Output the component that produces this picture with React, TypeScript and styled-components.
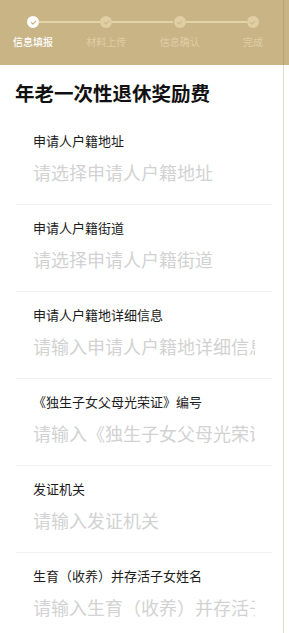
import React from 'react';
import styled, { createGlobalStyle } from 'styled-components';

const GlobalStyle = createGlobalStyle`
    html, body {
        margin: 0;
        padding: 0;
        background: #ffffff;
    }
    body {
        font-family: 'Noto Sans CJK SC', 'Noto Sans', sans-serif;
    }
`;

const steps = ['信息填报', '材料上传', '信息确认', '完成'];

const fields = [
    { label: '申请人户籍地址', placeholder: '请选择申请人户籍地址' },
    { label: '申请人户籍街道', placeholder: '请选择申请人户籍街道' },
    { label: '申请人户籍地详细信息', placeholder: '请输入申请人户籍地详细信息' },
    { label: '《独生子女父母光荣证》编号', placeholder: '请输入《独生子女父母光荣证》编号' },
    { label: '发证机关', placeholder: '请输入发证机关' },
    { label: '生育（收养）并存活子女姓名', placeholder: '请输入生育（收养）并存活子女姓名' }
];

function Check({ color }: { color: string }) {
    return (
        <svg width='7' height='7' viewBox='0 0 10 10'>
            <path d='M2 5.2 L4.2 7.3 L8.2 3' fill='none' stroke={color} strokeWidth='1.6' strokeLinecap='round' strokeLinejoin='round' />
        </svg>
    );
}

export default function App() {
    return (
        <Page>
            <GlobalStyle />
            <Header>
                <Steps>
                    {steps.map((s, i) => (
                        <Step key={s} last={i === steps.length - 1}>
                            <Dot active={i === 0}>
                                <Check color={i === 0 ? '#c6ae7c' : '#cdb98a'} />
                            </Dot>
                            <StepLabel active={i === 0}>{s}</StepLabel>
                        </Step>
                    ))}
                </Steps>
            </Header>
            <Title>年老一次性退休奖励费</Title>
            {fields.map((f) => (
                <Row key={f.label}>
                    <Label>{f.label}</Label>
                    <Input placeholder={f.placeholder} />
                    <Divider />
                </Row>
            ))}
        </Page>
    );
}

const Page = styled.div`
    position: relative;
    width: 289px;
    min-height: 633px;
    overflow: hidden;

    &::after {
        content: '';
        position: absolute;
        top: 0;
        bottom: 0;
        left: 283px;
        width: 1px;
        background: rgba(120, 110, 90, 0.25);
    }
`;

const Header = styled.div`
    height: 65px;
    background: #c9b486;
`;

const Steps = styled.div`
    display: grid;
    grid-template-columns: repeat(4, 73.33px);
    margin-left: -3.67px;
    padding-top: 16px;
`;

const Step = styled.div<{ last: boolean }>`
    position: relative;
    display: flex;
    flex-direction: column;
    align-items: center;

    &::after {
        content: '';
        display: ${(p) => (p.last ? 'none' : 'block')};
        position: absolute;
        top: 5px;
        left: calc(50% + 6px);
        width: 61px;
        height: 2px;
        background: #e3d3a9;
    }
`;

const Dot = styled.div<{ active: boolean }>`
    width: 12px;
    height: 12px;
    border-radius: 50%;
    background: ${(p) => (p.active ? '#ffffff' : '#e0cfa3')};
    display: flex;
    align-items: center;
    justify-content: center;
`;

const StepLabel = styled.div<{ active: boolean }>`
    margin-top: 7px;
    font-size: 10px;
    line-height: 14px;
    white-space: nowrap;
    color: ${(p) => (p.active ? '#ffffff' : '#dfcea3')};
    font-weight: ${(p) => (p.active ? 500 : 400)};
`;

const Title = styled.div`
    padding: 15px 0 12px 15px;
    font-size: 19.5px;
    line-height: 26px;
    font-weight: bold;
    color: #111111;
`;

const Row = styled.div`
    display: flex;
    flex-direction: column;
    padding-top: 14px;
`;

const Label = styled.div`
    padding-left: 33px;
    font-size: 13px;
    line-height: 18px;
    color: #1c1c1c;
    white-space: nowrap;
`;

const Input = styled.input`
    margin: 10px 0 20px 33px;
    width: 222px;
    height: 24px;
    padding: 0;
    border: none;
    outline: none;
    background: transparent;
    font-family: 'Noto Sans CJK SC', 'Noto Sans', sans-serif;
    font-size: 18px;
    line-height: 24px;
    color: #333333;

    &::placeholder {
        color: #d2d2d2;
    }
`;

const Divider = styled.div`
    height: 1px;
    margin: 0 17px 0 16px;
    background: #f1f1f1;
`;
